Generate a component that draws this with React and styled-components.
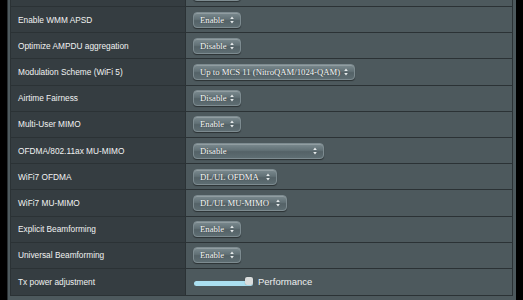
import React from "react";
import styled, { createGlobalStyle } from "styled-components";

const GlobalStyle = createGlobalStyle`
  html, body {
    margin: 0;
    padding: 0;
    background: #000;
  }
  body {
    font-family: "Liberation Sans", Arial, sans-serif;
  }
`;

const rows = [
  { label: "Enable WMM No-Acknowledgement", type: "select", value: "Disable", width: 48 },
  { label: "Enable WMM APSD", type: "select", value: "Enable", width: 48 },
  { label: "Optimize AMPDU aggregation", type: "select", value: "Disable", width: 48 },
  { label: "Modulation Scheme (WiFi 5)", type: "select", value: "Up to MCS 11 (NitroQAM/1024-QAM)", width: 162 },
  { label: "Airtime Fairness", type: "select", value: "Disable", width: 48 },
  { label: "Multi-User MIMO", type: "select", value: "Enable", width: 48 },
  { label: "OFDMA/802.11ax MU-MIMO", type: "select", value: "Disable", width: 131 },
  { label: "WiFi7 OFDMA", type: "select", value: "DL/UL OFDMA", width: 84 },
  { label: "WiFi7 MU-MIMO", type: "select", value: "DL/UL MU-MIMO", width: 94 },
  { label: "Explicit Beamforming", type: "select", value: "Enable", width: 48 },
  { label: "Universal Beamforming", type: "select", value: "Enable", width: 48 },
  { label: "Tx power adjustment", type: "slider", value: "Performance" },
];

const SelectArrows = () => (
  <svg width="4" height="8" viewBox="0 0 4 8">
    <path d="M2 0.5 L3.8 3 L0.2 3 Z" fill="#e6eaeb" />
    <path d="M2 7.5 L3.8 5 L0.2 5 Z" fill="#e6eaeb" />
  </svg>
);

const App = () => {
  return (
    <>
      <GlobalStyle />
      <Viewport>
        <Panel>
          <FormTable>
            {rows.map((row) => (
              <Row key={row.label}>
                <Label>{row.label}</Label>
                <Value>
                  {row.type === "select" ? (
                    <Select $width={row.width}>
                      <span>{row.value}</span>
                      <SelectArrows />
                    </Select>
                  ) : (
                    <SliderWrap>
                      <Track>
                        <Thumb />
                      </Track>
                      <SliderText>{row.value}</SliderText>
                    </SliderWrap>
                  )}
                </Value>
              </Row>
            ))}
          </FormTable>
        </Panel>
      </Viewport>
    </>
  );
};

const Viewport = styled.div`
  height: 300px;
  overflow: hidden;
  padding-left: 7px;
`;

const Panel = styled.div`
  width: 509px;
  box-sizing: border-box;
  background: #4d595d;
  padding: 0 3px 10px 2px;
  margin-top: -19.2px;
  border-left: 1px solid #2a3033;
`;

const FormTable = styled.div`
  border: 1px solid #2b3235;
  border-top: none;
  display: flex;
  flex-direction: column;
`;

const Row = styled.div`
  display: grid;
  grid-template-columns: 175px 1fr;
  height: 26.2px;
  box-sizing: border-box;
  border-bottom: 1px solid #2b3235;

  &:last-child {
    border-bottom: none;
  }
`;

const Label = styled.div`
  background: #353d41;
  border-right: 1px solid #2b3235;
  display: flex;
  align-items: center;
  padding-left: 7px;
  font-size: 8.3px;
  color: #f1f2f2;
  white-space: nowrap;
`;

const Value = styled.div`
  background: #4d595d;
  display: flex;
  align-items: center;
  padding-left: 7px;
`;

const Select = styled.div`
  width: ${(p) => p.$width}px;
  height: 16px;
  box-sizing: border-box;
  display: flex;
  align-items: center;
  justify-content: space-between;
  padding: 0 6px 0 6px;
  border-radius: 4px;
  border: 1px solid #7d8b90;
  background: linear-gradient(
    to bottom,
    #7b8a8f 0%,
    #627176 45%,
    #546267 55%,
    #5e6d72 100%
  );
  box-shadow: 0 1px 1px rgba(0, 0, 0, 0.45), inset 0 1px 0 rgba(255, 255, 255, 0.18);
  font-family: "Liberation Serif", "Times New Roman", serif;
  font-size: 8.7px;
  color: #fafbfb;
  text-shadow: 0 0 1px rgba(0, 0, 0, 0.5);
  white-space: nowrap;

  svg {
    flex: none;
  }
`;

const SliderWrap = styled.div`
  display: flex;
  align-items: center;
  margin-left: 1px;
`;

const Track = styled.div`
  position: relative;
  width: 59px;
  height: 5px;
  border-radius: 3px;
  background: #aadff0;
  margin-top: 3px;
`;

const Thumb = styled.div`
  position: absolute;
  right: 0;
  top: -4px;
  width: 8px;
  height: 8px;
  border-radius: 2px;
  background: #dadddd;
  box-shadow: 0 0 1px rgba(0, 0, 0, 0.4);
`;

const SliderText = styled.span`
  margin-left: 5px;
  font-size: 9.5px;
  color: #eef0f0;
`;

export default App;
